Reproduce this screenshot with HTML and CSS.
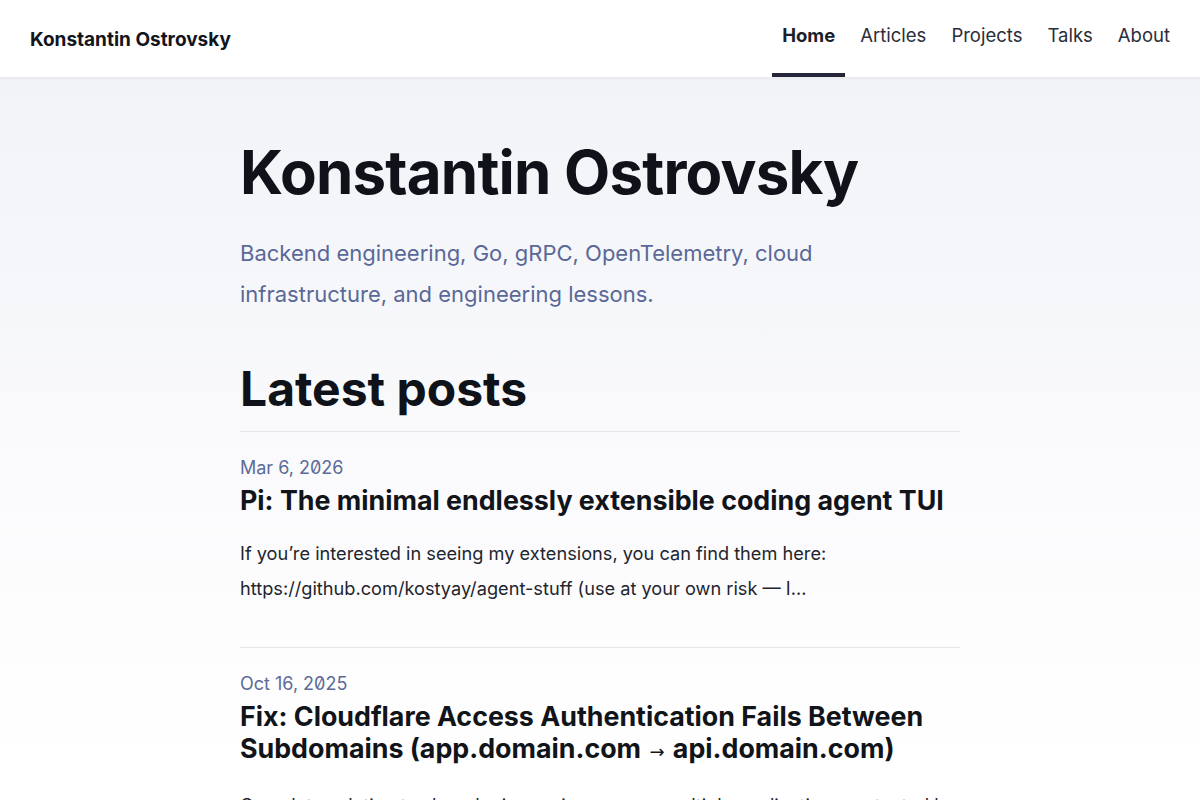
FILE: index.html
```html
<!DOCTYPE html>
<html lang="en">
<head>
    <meta charset="UTF-8">
    <meta name="viewport" content="width=device-width, initial-scale=1.0">
    <title>Konstantin Ostrovsky</title>
    <link rel="stylesheet" href="styles.css">
</head>
<body>

<header class="site-header">
    <a class="brand" href="#">Konstantin Ostrovsky</a>
    <nav class="nav">
        <a class="nav-link active" href="#">Home</a>
        <a class="nav-link" href="#">Articles</a>
        <a class="nav-link" href="#">Projects</a>
        <a class="nav-link" href="#">Talks</a>
        <a class="nav-link" href="#">About</a>
    </nav>
</header>

<main class="page">
    <div class="content">
        <!-- Intro -->
        <section class="hero">
            <h1>Konstantin Ostrovsky</h1>
            <p class="tagline">Backend engineering, Go, gRPC, OpenTelemetry, cloud infrastructure, and engineering lessons.</p>
        </section>

        <!-- Post list -->
        <section class="posts">
            <h2>Latest posts</h2>

            <article class="post">
                <time class="post-date">Mar 6, 2026</time>
                <h3 class="post-title"><a href="#">Pi: The minimal endlessly extensible coding agent TUI</a></h3>
                <p class="post-excerpt">If you’re interested in seeing my extensions, you can find them here: https://github.com/kostyay/agent-stuff (use at your own risk — I…</p>
            </article>

            <article class="post">
                <time class="post-date">Oct 16, 2025</time>
                <h3 class="post-title"><a href="#">Fix: Cloudflare Access Authentication Fails Between Subdomains (app.domain.com <span class="arrow">→</span> api.domain.com)</a></h3>
                <p class="post-excerpt">Complete solution to share login sessions across multiple applications protected by Cloudflare Access on the same domain.</p>
            </article>
        </section>
    </div>
</main>

</body>
</html>
```

FILE: styles.css
```css
body {
    margin: 0;
    font-family: Inter, "Noto Sans", sans-serif;
    color: #10131a;
    background: #fff;
}
a {
    color: inherit;
    text-decoration: none;
}

/* top bar */
.site-header {
    height: 77px;
    display: flex;
    align-items: center;
    justify-content: space-between;
    padding: 0 30px;
    background: #fff;
    border-bottom: 1px solid #e8eaee;
    box-shadow: 0 1px 3px rgba(20, 30, 50, 0.05);
    position: relative;
    z-index: 1;
}
.brand {
    font-size: 19px;
    font-weight: 700;
    color: #12151c;
    padding-top: 1px;
}
.nav {
    display: flex;
    align-self: stretch;
    gap: 5px;
}
.nav-link {
    display: flex;
    align-items: center;
    padding: 0 10px 3px;
    font-size: 18.5px;
    color: #2a2d3a;
    border-bottom: 4px solid transparent;
}
.nav-link:last-child {
    padding-right: 0;
}
.nav-link.active {
    font-weight: 700;
    color: #1b1e2b;
    border-bottom-color: #232638;
}

/* page body */
.page {
    background: linear-gradient(#f1f3f7 0, #fbfbfd 420px, #fff 700px);
    min-height: 723px;
}
.content {
    width: 720px;
    margin: 0 auto;
    padding-top: 58px;
}
.hero h1 {
    margin: 0;
    font-size: 60px;
    line-height: 72px;
    font-weight: 700;
    letter-spacing: -0.8px;
    color: #0f1218;
}
.tagline {
    margin: 25px 0 0;
    font-size: 22px;
    line-height: 41px;
    color: #5a6897;
    max-width: 600px;
}
.posts {
    margin-top: 46px;
}
.posts h2 {
    margin: 0;
    font-size: 48px;
    line-height: 56px;
    font-weight: 700;
    color: #0f1218;
    padding-bottom: 14px;
}
.post {
    border-top: 1px solid #e4e6eb;
    padding: 24px 0 41px;
}
.post-date {
    display: block;
    font-size: 18px;
    line-height: 24px;
    color: #5d6b98;
    font-variant-numeric: slashed-zero;
    font-feature-settings: "zero" 1;
}
.post-title {
    margin: 4px 0 0;
    font-size: 26.8px;
    line-height: 32px;
    font-weight: 700;
    color: #111419;
}
.arrow {
    font-family: "DejaVu Sans", sans-serif;
    font-weight: 400;
    font-size: 18px;
    padding: 0 2px;
}
.post-excerpt {
    margin: 20px 0 0;
    font-size: 18.2px;
    line-height: 35px;
    color: #22252e;
}
```
